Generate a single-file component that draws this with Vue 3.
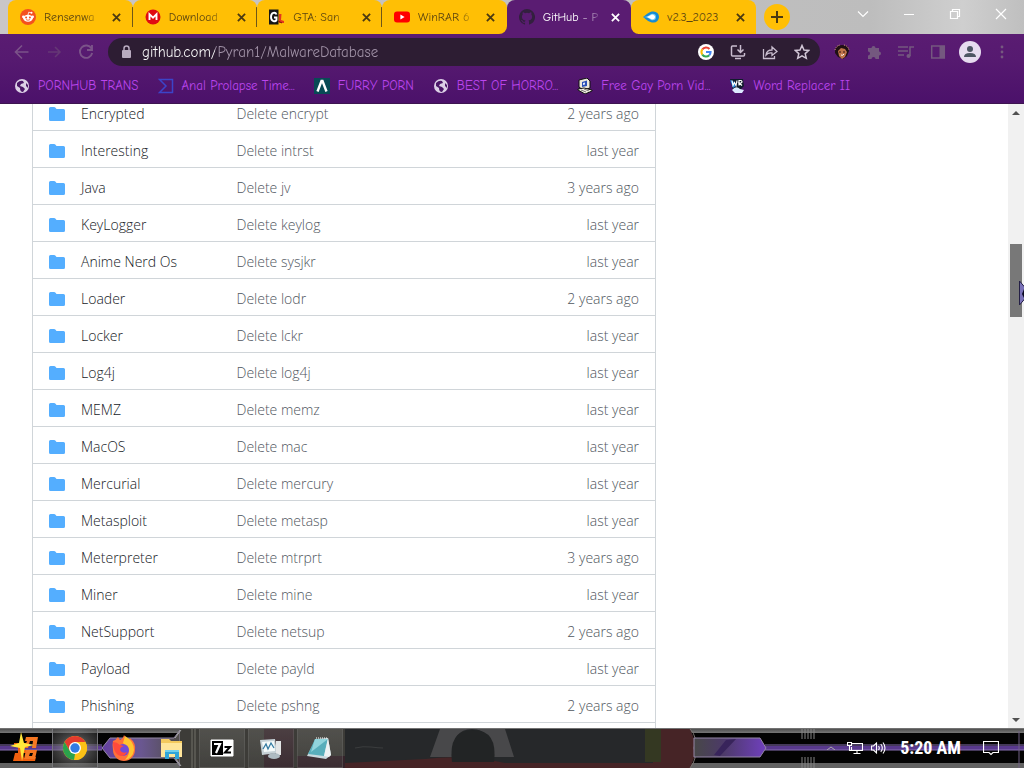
<script setup>
import { ref } from 'vue'

const tabs = [
  { id: 1, title: 'Rensenwa', icon: 'reddit' },
  { id: 2, title: 'Download', icon: 'mega' },
  { id: 3, title: 'GTA: San', icon: 'gta' },
  { id: 4, title: 'WinRAR 6', icon: 'youtube' },
  { id: 5, title: 'GitHub - P', icon: 'github' },
  { id: 6, title: 'v2.3_2023', icon: 'drop' }
]
const activeTab = ref(5)

const bookmarks = [
  { label: 'PORNHUB TRANS', icon: 'globe' },
  { label: 'Anal Prolapse Time...', icon: 'sigma' },
  { label: 'FURRY PORN', icon: 'lambda' },
  { label: 'BEST OF HORRO...', icon: 'globe' },
  { label: 'Free Gay Porn Vid...', icon: 'computer' },
  { label: 'Word Replacer II', icon: 'word' }
]

const navButtons = [
  { label: 'Back', icon: 'back' },
  { label: 'Forward', icon: 'forward' },
  { label: 'Reload', icon: 'reload' }
]

const pageActions = [
  { label: 'Search with Google', icon: 'google' },
  { label: 'Install', icon: 'install' },
  { label: 'Share', icon: 'share' },
  { label: 'Bookmark', icon: 'star' }
]

const extensions = [
  { label: 'Extension', icon: 'face' },
  { label: 'Extensions', icon: 'puzzle' },
  { label: 'Media', icon: 'playlist' },
  { label: 'Side panel', icon: 'panel' }
]

const windowButtons = [
  { label: 'Search tabs', icon: 'chevron' },
  { label: 'Minimize', icon: 'minimize' },
  { label: 'Restore', icon: 'restore' },
  { label: 'Close', icon: 'closeWindow' }
]

const url = ref('github.com/Pyran1/MalwareDatabase')

const files = [
  { name: 'Encrypted', commit: 'Delete encrypt', age: '2 years ago' },
  { name: 'Interesting', commit: 'Delete intrst', age: 'last year' },
  { name: 'Java', commit: 'Delete jv', age: '3 years ago' },
  { name: 'KeyLogger', commit: 'Delete keylog', age: 'last year' },
  { name: 'Anime Nerd Os', commit: 'Delete sysjkr', age: 'last year' },
  { name: 'Loader', commit: 'Delete lodr', age: '2 years ago' },
  { name: 'Locker', commit: 'Delete lckr', age: 'last year' },
  { name: 'Log4j', commit: 'Delete log4j', age: 'last year' },
  { name: 'MEMZ', commit: 'Delete memz', age: 'last year' },
  { name: 'MacOS', commit: 'Delete mac', age: 'last year' },
  { name: 'Mercurial', commit: 'Delete mercury', age: 'last year' },
  { name: 'Metasploit', commit: 'Delete metasp', age: 'last year' },
  { name: 'Meterpreter', commit: 'Delete mtrprt', age: '3 years ago' },
  { name: 'Miner', commit: 'Delete mine', age: 'last year' },
  { name: 'NetSupport', commit: 'Delete netsup', age: '2 years ago' },
  { name: 'Payload', commit: 'Delete payld', age: 'last year' },
  { name: 'Phishing', commit: 'Delete pshng', age: '2 years ago' }
]

const apps = [
  { label: 'Google Chrome', icon: 'chrome', state: 'current' },
  { label: 'Firefox', icon: 'firefox', state: '' },
  { label: 'File Explorer', icon: 'explorer', state: '' },
  { label: '7-Zip', icon: 'sevenzip', state: 'open' },
  { label: 'Monitor', icon: 'monitor', state: 'open' },
  { label: 'Notepad', icon: 'notepad', state: 'open' }
]

// 16x16 icons
const icons = {
  reddit: '<circle cx="8" cy="8" r="8" fill="#f4511e"/><circle cx="11.5" cy="3.7" r="1" fill="#fff"/><path d="M8 6l.7-2.8 2.6.6" fill="none" stroke="#fff" stroke-width=".8"/><circle cx="3.4" cy="7.8" r="1.4" fill="#fff"/><circle cx="12.6" cy="7.8" r="1.4" fill="#fff"/><ellipse cx="8" cy="9.2" rx="4.8" ry="3.5" fill="#fff"/><circle cx="6.1" cy="8.5" r="1" fill="#f4511e"/><circle cx="9.9" cy="8.5" r="1" fill="#f4511e"/><path d="M6 10.6q2 1.3 4 0" fill="none" stroke="#f4511e" stroke-width=".8"/>',
  mega: '<circle cx="8" cy="8" r="7.5" fill="#e00b12"/><path d="M4.5 11V5.2L8 8.7l3.5-3.5V11" fill="none" stroke="#fff" stroke-width="1.9"/>',
  gta: '<rect width="9.5" height="15" y=".5" fill="#161616"/><path d="M7.5 5.5C6.5 3 2 3 2 8s4.500 5 5.500 3V8.500H5" fill="none" stroke="#fff" stroke-width="1.9"/><path d="M10 5h2.500l-.5 6 3 1v2h-5z" fill="#e3371e"/><path d="M9 12l4 2" stroke="#7a1708"/>',
  youtube: '<rect y="2.5" width="16" height="11" rx="3" fill="#f00"/><path d="M6.400 5.600v4.800L10.600 8z" fill="#fff"/>',
  github: '<path fill="#32203e" d="M8 0a8 8 0 0 0-2.530 15.590c.4.070.55-.17.55-.38v-1.490C4 14.090 3.480 13.230 3.320 12.780c-.09-.23-.48-.94-.82-1.130-.28-.15-.68-.52-.01-.53.63-.01 1.080.58 1.230.82.72 1.210 1.870.87 2.330.66.070-.52.28-.87.51-1.070-1.780-.2-3.640-.89-3.640-3.950 0-.87.31-1.590.82-2.150-.08-.2-.36-1.020.08-2.120 0 0 .67-.21 2.200.82a7.400 7.400 0 0 1 4 0c1.530-1.040 2.200-.82 2.200-.82.44 1.100.16 1.920.08 2.120.51.56.82 1.270.82 2.150 0 3.070-1.870 3.750-3.650 3.950.29.25.54.73.54 1.480v2.200c0 .21.150.46.55.38A8 8 0 0 0 8 0z"/>',
  drop: '<path d="M0 8C4 5 6 2.500 10.500 2.500a5.500 5.500 0 0 1 0 11C6 13.500 4 11 0 8z" fill="#168bd2"/><path d="M0 8q5 0 8-3 5-1 5 3t-5 3q-3-3-8-3z" fill="#75c9f2"/><path d="M4 8l5-2.500q3 .5 3 2.500t-3 2.500z" fill="#fff"/>',
  globe: '<circle cx="8" cy="8" r="7" fill="#dcd0e6"/><path d="M3 5q3-3 6-2l1 2-3 1-1 2 3 1 2 2-2 3q-3 0-3-4L3 8zm9 0l2 2v3l-2-2z" fill="#4b1767"/>',
  sigma: '<path d="M1.500 1.500h13v13h-13L8 8z" fill="none" stroke="#3c44c8" stroke-width="1.5"/>',
  lambda: '<rect width="16" height="16" fill="#084a55"/><path d="M3.500 13.500L7.500 3h1l4 10.500" fill="none" stroke="#fff" stroke-width="2.4"/>',
  computer: '<path d="M2 2l8-2 3 3v7l-7 2-4-3z" fill="#ebe8dc" stroke="#111"/><path d="M5 4l5-1.500V8L5 9z" fill="#2b51b7"/><path d="M6 5l2-.5v2L6 7z" fill="#dfe8ff"/><path d="M1 11l6-1 8 2v1l-7 3-7-4z" fill="#f5f2e5" stroke="#111"/><path d="M4 12l5 2m-2-3l5 2" stroke="#777"/>',
  word: '<path d="M1 1h13l1 7-4 4H4z" fill="#101b2b"/><path d="M1 2l3 1 3 5-3 2z" fill="#2386df"/><path d="M3 2.500l1 5 1.500-3 1.500 3 1-5M10 7.500v-5h2q2 1 0 2.500h-2l3 2.500" fill="none" stroke="#fff" stroke-width="1.2"/><path d="M3 12q4-5 8-1l4 1-2 3H6z" fill="#dceaff"/>',
  back: '<path d="M14.500 8h-13M8 1.500L1.500 8 8 14.500" fill="none" stroke="#7b5389" stroke-width="1.6"/>',
  forward: '<path d="M2 8h12M9 3l5 5-5 5" fill="none" stroke="#653875" stroke-width="1.5"/>',
  reload: '<path d="M13.500 4.500A6.200 6.200 0 1 0 14.200 9M14 1v5H9" fill="none" stroke="#7b5389" stroke-width="1.9"/>',
  lock: '<rect x="4" y="6" width="9" height="8" rx="1" fill="#b9abc0"/><path d="M6 6V4.500a2.500 2.500 0 0 1 5 0V6" fill="none" stroke="#b9abc0" stroke-width="1.5"/>',
  google: '<circle cx="8" cy="8" r="8" fill="#fff"/><path d="M4.300 5.400A4.600 4.600 0 0 1 11.500 5" fill="none" stroke="#ea4335" stroke-width="2"/><path d="M4.300 5.400a4.600 4.600 0 0 0 0 5.200" fill="none" stroke="#fbbc05" stroke-width="2"/><path d="M4.300 10.600a4.600 4.600 0 0 0 7 .6" fill="none" stroke="#34a853" stroke-width="2"/><path d="M8 8h4.600a4.600 4.600 0 0 1-1.300 3.200" fill="none" stroke="#4285f4" stroke-width="2"/>',
  install: '<path d="M7 2H2.500Q1.500 2 1.500 3v8q0 1 1 1h11q1 0 1-1V9M5 14.500h6M10.500 1v7M7.500 5.500l3 3 3-3" fill="none" stroke="#c9bdcf" stroke-width="1.5"/>',
  share: '<path d="M1.500 5v9.500h11V12M4 11q.5-5 6-5V3l5 4.500-5 4V9q-4-.5-6 2z" fill="none" stroke="#c9bdcf" stroke-width="1.3"/>',
  star: '<path d="M8 1.500l2 4.500 4.800.4-3.600 3.200 1.100 4.700L8 11.800l-4.300 2.500 1.100-4.700-3.600-3.200L6 6z" fill="none" stroke="#d2c7d7" stroke-width="1.5"/>',
  face: '<path d="M1 7q0-6 7-6 7 0 7 6l-2 5-4 3-5-2-3-4z" fill="#201014"/><path d="M4 7l3-3 4 1 2 3-2 5-3 2-3-3z" fill="#c0744a"/><path d="M5 8h2m2 0h2" stroke="#321417"/><path d="M7 11q2 1 3-1" fill="none" stroke="#fff"/><path d="M1 6q1-4 5-5m4 0q4 1 5 5" fill="none" stroke="#e3aa7d" stroke-dasharray="1 1"/>',
  puzzle: '<path d="M2 4h3.500a2 2 0 1 1 4 0H13v3.500a2 2 0 1 1 0 4V15H9.500a2 2 0 0 0-4 0H2v-3.500a2 2 0 0 0 0-4z" fill="#74587f"/>',
  playlist: '<path d="M0 3h10M0 7h10M0 11h6M12 12V3h4" fill="none" stroke="#74587f" stroke-width="1.6"/><circle cx="10.5" cy="12" r="2" fill="#74587f"/>',
  panel: '<rect x="1.7" y="2" width="12.6" height="12" fill="none" stroke="#74587f" stroke-width="1.5"/><path d="M9.500 2h5v12h-5z" fill="#74587f"/>',
  menu: '<g fill="#76597f"><circle cx="8" cy="3" r="1.4"/><circle cx="8" cy="8" r="1.4"/><circle cx="8" cy="13" r="1.4"/></g>',
  chevron: '<path d="M3 5.500l5 5 5-5" fill="none" stroke="#fff" stroke-width="1.1"/>',
  minimize: '<path d="M3 8.500h10" stroke="#fff"/>',
  restore: '<path d="M3.500 5.500h7v7h-7zM5.500 5.500v-2h7v7h-2" fill="none" stroke="#fff" stroke-width="1.2"/>',
  closeWindow: '<path d="M3 3l10 10M13 3L3 13" stroke="#fff" stroke-width="1.2"/>',
  network: '<path d="M5 3.500h10.500v7H4.500V7M10 10.500v3M6.500 13.500h7M.5 2.500h4v3h-4zM2.500 5.500v5h2" fill="none" stroke="#fff" stroke-width="1.1"/>',
  volume: '<path d="M.5 6h2l3-3v10l-3-3h-2zM7.500 6q1.500 2 0 4M9.800 4q3 4 0 8M12 2.500q4 5.500 0 11" fill="none" stroke="#fff" stroke-width="1.1"/>',
  message: '<path d="M.5 1.500h15v11H10l-2 2-2-2H.5z" fill="none" stroke="#fff" stroke-width="1.2"/>'
}

// 32x32 icons of the taskbar
const appIcons = {
  start: '<path d="M5 11h13v4h-4v3h4v3h-4l1 5 12-1-1 4H4l2-8h3v-6H5z" fill="#f1600f"/><path d="M17 5h12l-2 11h-4l1-7h-3l-2 7h-4l3-7h-2zm0 13h11l-2 9H15zm4 3l-1 3h3l1-3z" fill="#f57722"/><path d="M12 0l3 11 10 2-9 2-3 14-2-13-10-2 9-3z" fill="#ffe83b"/>',
  chrome: '<circle cx="16" cy="16" r="12" fill="#fbc116"/><path d="M5.600 10A12 12 0 0 1 26.400 10H16L10.800 19z" fill="#e33b2e"/><path d="M5.600 10l5.200 9L16 22l-1 6A12 12 0 0 1 5.600 10z" fill="#2ba24c"/><path d="M26.400 10A12 12 0 0 1 15 28l6.200-9A6 6 0 0 0 16 10z" fill="#fbc116"/><circle cx="16" cy="16" r="6" fill="#fff"/><circle cx="16" cy="16" r="4.7" fill="#317ce5"/>',
  firefox: '<path d="M5 9q3-1 5-4l2 3q3-1 4-5 2 4 5 6l1-3q6 5 5 12a11 11 0 0 1-22 0q-1-5 0-9z" fill="#ff7139"/><path d="M17 4q9 5 9 14-1 8-9 10 6-7 3-12l-5-5z" fill="#ffc52f"/><circle cx="15" cy="18" r="6" fill="#704bd8"/><path d="M5 10q4 0 7 3l4 1q-4 1-4 4 2 4 7 2-3 6-9 3-5-4-5-13z" fill="#ff4a3d"/>',
  explorer: '<path d="M4 7h8l2 2h11v16H4z" fill="#f4c95d"/><path d="M4 11h21v14H4z" fill="#ffe59a"/><path d="M8 18h14v9h-4v-5h-6v5H8z" fill="#32a5d9"/><path d="M8 18h14v2H8z" fill="#72cfec"/>',
  sevenzip: '<path d="M5 8h22v16H5z" fill="#fff" stroke="#fff"/><path d="M6 9h11v14H6z"/><path d="M8 12h6l-4 9" fill="none" stroke="#fff" stroke-width="2.2"/><path d="M18.500 15H24l-5 5.500h6" fill="none" stroke="#000" stroke-width="2"/>',
  monitor: '<path d="M5 8l15-1 2 14-15 2z" fill="#c5d0d5"/><path d="M7 10l12-1 1 10-11 1z" fill="#f5fafa"/><path d="M8 17l3-5 2 5 3-6 3 5" fill="none" stroke="#347aa1" stroke-width="1.3"/><path d="M21 9h5v14h-5z" fill="#e3e5e6"/><ellipse cx="19" cy="24" rx="6" ry="3" fill="#aebbc2"/>',
  notepad: '<path d="M12 7l12-1 3 17-5 4-19-3z" fill="#c8d9de"/><path d="M11 7h13l-4 17-16-2z" fill="#58aebb"/><path d="M11 7h13L7 20z" fill="#91d4dc"/><path d="M20 24l5 1 2-2-3-17z" fill="#edf2f3"/><path d="M12 6h12" stroke="#fff" stroke-dasharray="1 1"/>'
}
</script>

<template>
  <div class="desktop">
    <header class="browser">
      <div class="tab-strip">
        <nav class="tabs" aria-label="Tabs">
          <div v-for="tab in tabs" :key="tab.id" class="tab" :class="{ active: tab.id === activeTab }"
            @click="activeTab = tab.id">
            <svg class="icon" viewBox="0 0 16 16" v-html="icons[tab.icon]"></svg>
            <span class="tab-title">{{ tab.title }}</span>
            <button class="tab-close" aria-label="Close tab">
              <svg viewBox="0 0 10 10"><path d="M1 1l8 8M9 1L1 9" /></svg>
            </button>
          </div>
        </nav>
        <button class="new-tab" aria-label="New tab">
          <svg viewBox="0 0 12 12"><path d="M6 0v12M0 6h12" /></svg>
        </button>
        <div class="window-buttons">
          <button v-for="b in windowButtons" :key="b.label" :aria-label="b.label">
            <svg class="icon" viewBox="0 0 16 16" v-html="icons[b.icon]"></svg>
          </button>
        </div>
      </div>

      <div class="toolbar">
        <button v-for="b in navButtons" :key="b.label" class="tool" :aria-label="b.label">
          <svg class="icon" viewBox="0 0 16 16" v-html="icons[b.icon]"></svg>
        </button>
        <div class="omnibox">
          <svg class="icon" viewBox="0 0 16 16" v-html="icons.lock"></svg>
          <input v-model="url" type="text" aria-label="Address" spellcheck="false" />
          <button v-for="b in pageActions" :key="b.label" class="tool" :aria-label="b.label">
            <svg class="icon" viewBox="0 0 16 16" v-html="icons[b.icon]"></svg>
          </button>
        </div>
        <button v-for="b in extensions" :key="b.label" class="tool" :aria-label="b.label">
          <svg class="icon" viewBox="0 0 16 16" v-html="icons[b.icon]"></svg>
        </button>
        <button class="tool" aria-label="Profile">
          <svg class="profile" viewBox="0 0 22 22">
            <circle cx="11" cy="11" r="11" fill="#e6dcef" />
            <circle cx="11" cy="8" r="3" fill="#4d5663" />
            <path d="M5 16q0-4 6-4t6 4z" fill="#4d5663" />
          </svg>
        </button>
        <button class="tool" aria-label="Menu">
          <svg class="icon" viewBox="0 0 16 16" v-html="icons.menu"></svg>
        </button>
      </div>

      <nav class="bookmarks" aria-label="Bookmarks">
        <a v-for="b in bookmarks" :key="b.label" href="#">
          <svg class="icon" viewBox="0 0 16 16" v-html="icons[b.icon]"></svg>
          <span>{{ b.label }}</span>
        </a>
      </nav>
    </header>

    <main class="page">
      <div class="content">
        <section class="file-box">
          <table>
            <tbody>
              <tr v-for="file in files" :key="file.name">
                <td class="col-icon">
                  <svg class="icon" viewBox="0 0 16 16">
                    <path fill="#54aeff"
                      d="M1.500 1A1.500 1.500 0 0 0 0 2.500v11A1.500 1.500 0 0 0 1.500 15h13a1.500 1.500 0 0 0 1.500-1.500v-9A1.500 1.500 0 0 0 14.500 3h-7L6.300 1.600A1.500 1.500 0 0 0 5 1z" />
                  </svg>
                </td>
                <td class="col-name"><a href="#">{{ file.name }}</a></td>
                <td><a href="#" class="muted">{{ file.commit }}</a></td>
                <td class="col-age muted">{{ file.age }}</td>
              </tr>
            </tbody>
          </table>
        </section>
      </div>
      <div class="scrollbar">
        <button aria-label="Scroll up"><svg viewBox="0 0 8 4"><path d="M0 4l4-4 4 4z" /></svg></button>
        <div class="track">
          <div class="thumb"></div>
        </div>
        <button aria-label="Scroll down"><svg viewBox="0 0 8 4"><path d="M0 0l4 4 4-4z" /></svg></button>
        <svg class="cursor" viewBox="0 0 5 26">
          <path d="M.5 1l6 7v10l-6 7z" fill="#7a72b8" stroke="#241f45" />
          <path d="M5 9v9l-2-4z" fill="#0b0920" />
        </svg>
      </div>
    </main>

    <footer class="taskbar">
      <svg class="wallpaper" viewBox="0 0 1024 40" preserveAspectRatio="none">
        <defs>
          <linearGradient id="edge" x2="0" y2="1">
            <stop offset="0" stop-color="#444" />
            <stop offset="1" stop-color="#777" />
          </linearGradient>
          <linearGradient id="blade">
            <stop offset="0" stop-color="#484848" />
            <stop offset=".4" stop-color="#4c3a67" />
            <stop offset="1" stop-color="#7040be" />
          </linearGradient>
          <linearGradient id="metal">
            <stop offset="0" stop-color="#6440a0" />
            <stop offset=".5" stop-color="#6a5791" />
            <stop offset="1" stop-color="#504d49" />
          </linearGradient>
        </defs>
        <rect width="1024" height="40" fill="#030303" />
        <rect width="1024" height="5" fill="url(#edge)" />
        <rect y="35" width="1024" height="5" fill="#626262" />
        <path d="M0 20h102M765 20h259" stroke="#59398e" stroke-width="4" />
        <path d="M0 17h102M0 22h102M765 17h259M765 22h259" stroke="#8870b3" />
        <path d="M102 20l8-10h64l6-8v36l-6-8h-64z" fill="url(#metal)" stroke="#958aa5" />
        <path d="M180 0h167v40H180z" fill="#3d3c38" />
        <path d="M181 2l-6 8M181 38l-6-8" stroke="#aaa" />
        <path d="M192 1v39M195 1v39" stroke="#737069" />
        <path d="M345 1h345l8 19-8 20H345z" fill="#26282a" />
        <path d="M264 1h30v39h-30zM297 28h48v12h-48z" fill="#35232a" />
        <path d="M345 35q40-2 80-4 40-5 80 4h148V1h37l8 19-8 20H345z" fill="#462426" />
        <path d="M430 29l10-28h65l9 28h-20q-2-28-22-28t-20 28z" fill="#48484a" />
        <path d="M452 34q-4-32 21-32t21 32z" fill="#222425" />
        <path d="M645 1h16v33h-16z" fill="#343822" />
        <path d="M355 20q8-2 16-1t12 1" fill="none" stroke="#3b3d3e" />
        <path d="M690 1q8 8 4 19 4 10-4 20" fill="none" stroke="#7a706c" />
        <path d="M694 10h66l6 10-6 9h-66z" fill="url(#blade)" stroke="#9486a6" />
        <path d="M714 27l12-15 10-1-16 17z" fill="#38245b" />
        <path d="M802 1v10m3-10v10m3-10v10m3-10v10m3-10v10M802 29v11m3-11v11m3-11v11m3-11v11m3-11v11" stroke="#858585" />
        <path d="M0 .5h1024" stroke="#727272" />
        <path d="M1019 3v37" stroke="#716184" />
      </svg>
      <button class="start" aria-label="Start">
        <svg viewBox="0 0 32 32" v-html="appIcons.start"></svg>
      </button>
      <button v-for="app in apps" :key="app.label" class="app" :class="app.state" :aria-label="app.label">
        <svg viewBox="0 0 32 32" v-html="appIcons[app.icon]"></svg>
      </button>
      <div class="tray">
        <button aria-label="Show hidden icons">
          <svg class="caret" viewBox="0 0 8 4"><path d="M0 4l4-3 4 3" /></svg>
        </button>
        <button aria-label="Network"><svg class="icon" viewBox="0 0 16 16" v-html="icons.network"></svg></button>
        <button aria-label="Volume"><svg class="icon" viewBox="0 0 16 16" v-html="icons.volume"></svg></button>
        <time>5:20 AM</time>
        <button class="messages" aria-label="Notifications">
          <svg class="icon" viewBox="0 0 16 16" v-html="icons.message"></svg>
        </button>
      </div>
    </footer>
  </div>
</template>

<style>
body {
  background: #fff;
}
</style>

<style scoped>
.desktop {
  display: flex;
  flex-direction: column;
  min-height: 100vh;
  font-family: "Comic Sans MS", "Comic Neue", "Open Sans", sans-serif;
  font-size: 12px;
}

svg {
  display: block;
  flex: none;
}

button {
  display: flex;
  align-items: center;
  justify-content: center;
  flex: none;
  padding: 0;
  border: 0;
  background: none;
}

a {
  color: inherit;
  text-decoration: none;
}

.icon {
  width: 16px;
  height: 16px;
}

/* Tabs */
.tab-strip {
  display: flex;
  height: 34px;
  padding-left: 8px;
  background: linear-gradient(90deg, #c9c6c8, #bdbdbd 85%, #cfcfcf 94%, #bfbfbf);
}

.tabs {
  display: flex;
  flex: 0 1 748px;
  min-width: 0;
}

.tab {
  display: flex;
  align-items: center;
  flex: 1 1 0;
  min-width: 0;
  box-sizing: border-box;
  padding: 0 10px 0 12px;
  border-radius: 8px 8px 0 0;
  background: #ffbf05;
  color: #5b4410;
}

.tab:nth-child(-n+3) {
  background: linear-gradient(#6f5718, #6f5718) right center / 1px 20px no-repeat #ffbf05;
}

.tab:nth-child(4) {
  border-radius: 8px 8px 8px 0;
}

.tab:nth-child(6) {
  border-radius: 8px 8px 0 8px;
}

.tab.active {
  background: #5a1c72;
  color: #fff;
}

.tabs:has(.active) {
  background: linear-gradient(#5a1c72, #5a1c72) 80% bottom / 160px 8px no-repeat;
}

.tab-title {
  flex: 1;
  min-width: 0;
  margin: 0 6px 0 8px;
  overflow: hidden;
  white-space: nowrap;
  mask-image: linear-gradient(90deg, #000 65%, transparent);
}

.tab:last-child .tab-title {
  mask-image: none;
}

.active .tab-title {
  font-weight: 500;
}

.tab-close {
  width: 12px;
  height: 16px;
}

.tab-close svg {
  width: 9px;
  height: 9px;
  fill: none;
  stroke: #4b3a12;
  stroke-width: 2;
}

.active .tab-close svg {
  stroke: #fff;
}

.new-tab {
  align-self: center;
  width: 26px;
  height: 26px;
  margin-left: 8px;
  border-radius: 50%;
  background: #ffbf05;
}

.new-tab svg {
  width: 12px;
  height: 12px;
  stroke: #4b3a12;
  stroke-width: 2;
}

.window-buttons {
  display: flex;
  margin-left: auto;
}

.window-buttons button {
  width: 46px;
  height: 28px;
}

/* Toolbar */
.browser {
  background: linear-gradient(#5a1c72 34px, #561a70 60px, #4b116a);
  border-bottom: 1px solid #3d1450;
}

.toolbar {
  display: flex;
  align-items: center;
  height: 36px;
  padding: 0 6px;
}

.tool {
  width: 32px;
  height: 28px;
}

.omnibox {
  display: flex;
  align-items: center;
  flex: 1;
  min-width: 0;
  height: 28px;
  margin: 0 6px;
  padding: 0 2px 0 10px;
  border-radius: 14px;
  background: #2d1d33;
}

.omnibox input {
  flex: 1;
  min-width: 0;
  margin-left: 8px;
  padding: 0;
  border: 0;
  outline: 0;
  /* the host stands out from the path */
  background: linear-gradient(90deg, #fff 73px, #a293a8 73px);
  background-clip: text;
  color: transparent;
  font: 15px "Comic Sans MS", "Comic Neue", "Open Sans", sans-serif;
}

.profile {
  width: 22px;
  height: 22px;
}

/* Bookmarks */
.bookmarks {
  display: flex;
  align-items: center;
  gap: 19px;
  height: 31px;
  padding: 0 14px 2px;
  color: #bb45ee;
  font-size: 13px;
  white-space: nowrap;
}

.bookmarks a {
  display: flex;
  align-items: center;
  gap: 8px;
}

/* Page */
.page {
  display: flex;
  flex: 1;
  overflow: hidden;
  background: #fff;
}

.content {
  display: grid;
  grid-template-columns: minmax(0, 1fr) 296px;
  column-gap: 24px;
  flex: 1;
  padding: 0 32px;
}

.file-box {
  margin-top: -10px;
  border: solid #d0d5d9;
  border-width: 0 1px;
}

table {
  width: 100%;
  border-collapse: collapse;
  table-layout: fixed;
  font: 300 14px/20px "Segoe UI", "Open Sans", sans-serif;
  color: #15191e;
}

td {
  height: 32px;
  padding: 4px 0 0;
  border-bottom: 1px solid #d0d5d9;
}

.col-icon {
  width: 32px;
  padding-left: 16px;
}

.col-name {
  width: 25%;
}

.col-age {
  width: 112px;
  padding-right: 16px;
  text-align: right;
}

.muted {
  color: #50565e;
}

.scrollbar {
  position: relative;
  display: flex;
  flex-direction: column;
  width: 16px;
  background: #f1f1f1;
}

.scrollbar button {
  height: 17px;
}

.scrollbar button svg {
  width: 8px;
  height: 4px;
  fill: #505050;
}

.track {
  display: grid;
  flex: 1;
  grid-template-rows: 123fr 73fr 394fr;
  padding: 0 2px;
}

.thumb {
  grid-row: 2;
  background: #787878;
}

.cursor {
  position: absolute;
  top: 176px;
  right: 0;
  width: 5px;
  height: 26px;
}

/* Taskbar */
.taskbar {
  position: relative;
  display: flex;
  height: 40px;
  background: #030303;
}

.wallpaper {
  position: absolute;
  width: 100%;
  height: 40px;
}

.taskbar button,
.tray {
  position: relative;
}

.start {
  width: 49px;
}

.app {
  box-sizing: border-box;
  width: 46px;
  margin-left: 3px;
}

.start svg,
.app svg {
  width: 32px;
  height: 32px;
}

.app.current {
  border: 1px solid #77777a;
  background: radial-gradient(#ccccccaa, #77777788 50%, #33333366);
}

.app.open {
  border: 1px solid #76767155;
  background: linear-gradient(#8a8a8444, #55555533);
}

.tray {
  display: flex;
  align-items: center;
  gap: 8px;
  margin-left: auto;
  padding-right: 25px;
}

.caret {
  width: 8px;
  height: 4px;
  margin-right: 4px;
  fill: none;
  stroke: #aaa;
}

time {
  margin-left: 5px;
  color: #fff;
  font: bold 18px/24px "Roboto Condensed", "Open Sans Condensed", "Liberation Sans", sans-serif;
  white-space: nowrap;
}

.messages {
  margin-left: 14px;
}
</style>
